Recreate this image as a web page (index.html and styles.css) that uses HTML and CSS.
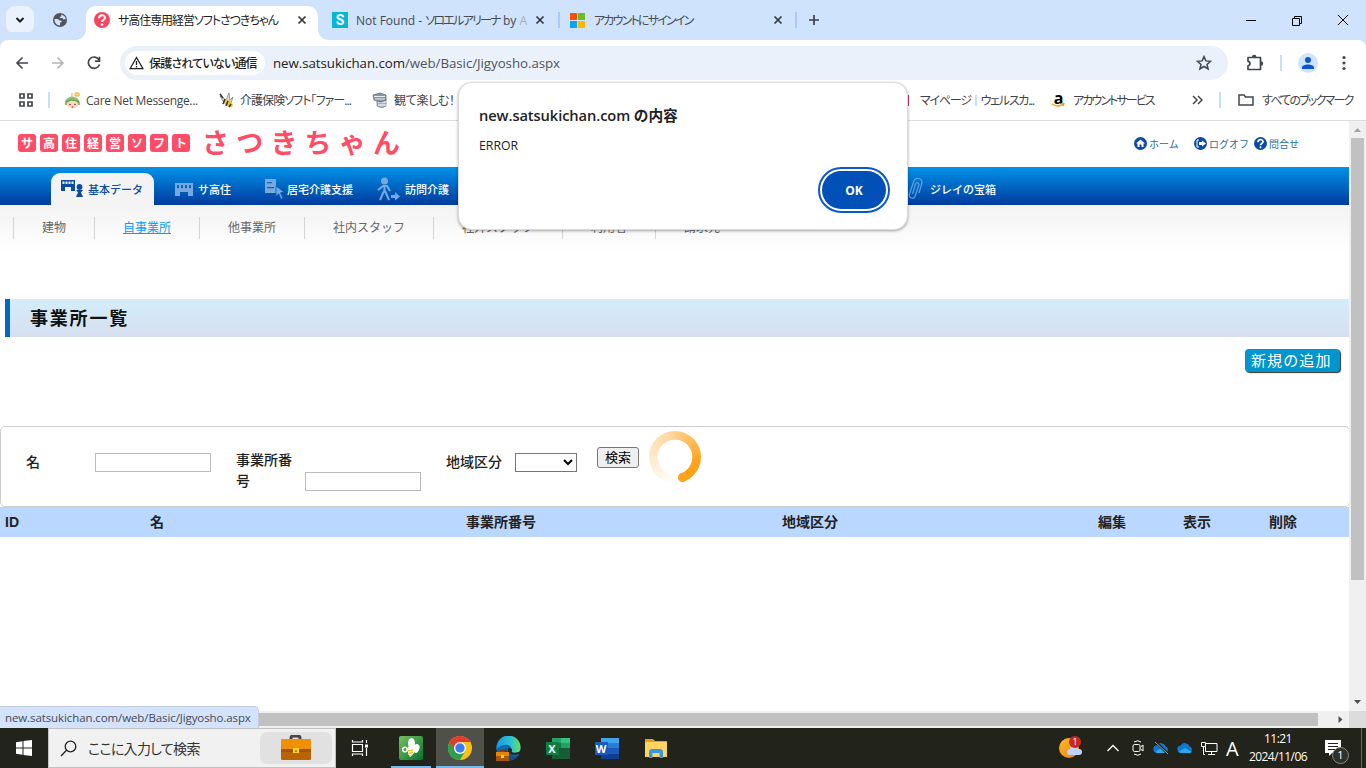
FILE: index.html
```html
<!DOCTYPE html>
<html lang="ja">
<head>
    <meta charset="UTF-8">
    <title>サ高住専用経営ソフトさつきちゃん</title>
    <link rel="stylesheet" href="styles.css">
</head>
<body>
<div class="screen">
    <div class="tabstrip">
        <div class="tab-search"><svg width="10" height="10" viewBox="0 0 10 10"><path d="M1.5 3l3.5 3.5L8.500 3" fill="none" stroke="#1f1f1f" stroke-width="2"/></svg></div>
        <svg class="globe" width="16" height="16" viewBox="0 0 16 16"><circle cx="8" cy="8" r="7" fill="#50555b"/><path d="M9 2.500c3 .5 4.500 2.500 4.800 4.500l-2.300.5-1-1.500H8V4.500h1.500zM2.500 7h3.500l1.500 1.500H9.500v2H8v3C4.500 13.500 2.300 10.500 2.500 7z" fill="#cfe3fc"/></svg>
        <div class="tab active">
            <svg width="16" height="16" viewBox="0 0 16 16"><circle cx="8" cy="8" r="8" fill="#fb4462"/><path d="M5 6.300c0-4 6-4 6-.7C11 8 8 8 8 10" fill="none" stroke="#fff" stroke-width="2"/><circle cx="8" cy="12.500" r="1.300" fill="#fff"/></svg>
            <span class="tab-name t1">サ高住専用経営ソフトさつきちゃん</span>
            <svg class="x" width="10" height="10" viewBox="0 0 10 10"><path d="M1.500 1.500l7 7m0-7l-7 7"/></svg>
        </div>
        <div class="tab tab2">
            <span class="fav-s">S</span>
            <span class="tab-name t2">Not Found - <span class="kana">ソロエルアリーナ</span> by <span class="fade">A</span></span>
            <svg class="x" width="10" height="10" viewBox="0 0 10 10"><path d="M1.500 1.500l7 7m0-7l-7 7"/></svg>
        </div>
        <div class="tab tab3">
            <svg width="15" height="15" viewBox="0 0 15 15"><path fill="#ff4a09" d="M0 0h7v7H0z"/><path fill="#6bbd23" d="M8 0h7v7H8z"/><path fill="#05a5f0" d="M0 8h7v7H0z"/><path fill="#ffb900" d="M8 8h7v7H8z"/></svg>
            <span class="tab-name t3">アカウントにサインイン</span>
            <svg class="x" width="10" height="10" viewBox="0 0 10 10"><path d="M1.500 1.500l7 7m0-7l-7 7"/></svg>
        </div>
        <svg class="plus" width="12" height="12" viewBox="0 0 12 12"><path d="M6 1v10M1 6h10" stroke="#3b4148" stroke-width="1.700"/></svg>
        <svg class="win-buttons" width="106" height="14" viewBox="0 0 106 14" fill="none" stroke="#000"><path d="M0 7.500h10M46.500 5.500h7v7h-7zM48.500 5v-1.500h7v7H54M92 2l10 10m0-10L92 12"/></svg>
    </div>

    <div class="toolbar">
        <svg width="14" height="14" viewBox="0 0 14 14"><path d="M13 7H2m5.500-5.500L2 7l5.500 5.500" fill="none" stroke="#42474c" stroke-width="1.600"/></svg>
        <svg width="14" height="14" viewBox="0 0 14 14"><path d="M1 7h11M6.500 1.500L12 7l-5.500 5.500" fill="none" stroke="#b3b5b8" stroke-width="1.600"/></svg>
        <svg width="14" height="14" viewBox="0 0 14 14"><path d="M12 3.800A5.700 5.700 0 1 0 12.500 8.500M12.500 .8v4.400H8" fill="none" stroke="#42474c" stroke-width="1.700"/></svg>
        <div class="omnibox">
            <div class="chip">
                <svg width="15" height="14" viewBox="0 0 15 14"><path d="M7.500 1.500L14 12.700H1z" fill="none" stroke="#222" stroke-width="1.300"/><path d="M7.500 5v4m0 1v1.500" stroke="#222" stroke-width="1.300"/></svg>
                <span>保護されていない通信</span>
            </div>
            <span class="url">new.satsukichan.com<i>/web/Basic/Jigyosho.aspx</i></span>
            <svg class="star" width="16" height="16" viewBox="0 0 16 16"><path d="M8 1.600l1.900 4.300 4.700.4-3.600 3.100 1.100 4.600L8 11.500 3.900 14 5 9.400 1.400 6.300l4.700-.4z" fill="none" stroke="#42474c" stroke-width="1.500"/></svg>
        </div>
        <svg class="puzzle" width="18" height="18" viewBox="0 0 18 18"><path d="M2 3.500h12.500v12H2v-3.700c2.600-.3 2.600-4.200 0-4.500z" fill="none" stroke="#42474c" stroke-width="1.700" stroke-linejoin="round"/><path d="M6 3a2.200 2.200 0 0 1 4.400 0zM15 7.300a2.200 2.200 0 0 1 0 4.400z" fill="#42474c"/></svg>
        <span class="bar"></span>
        <svg class="avatar" width="20" height="20" viewBox="0 0 20 20"><circle cx="10" cy="10" r="10" fill="#cfe3fc"/><circle cx="10" cy="7" r="3" fill="#0b57d0"/><path d="M4 16v-1.500c0-4 12-4 12 0V16z" fill="#0b57d0"/></svg>
        <svg class="dots" width="4" height="16" viewBox="0 0 4 16" fill="#42474c"><circle cx="2" cy="2.500" r="1.600"/><circle cx="2" cy="8" r="1.600"/><circle cx="2" cy="13.500" r="1.600"/></svg>
    </div>

    <div class="bookmarks">
        <svg class="apps" width="16" height="16" viewBox="0 0 16 16" fill="none" stroke="#42474c" stroke-width="1.700"><path d="M2 2h4v4H2zM10 2h4v4h-4zM2 10h4v4H2zM10 10h4v4h-4z"/></svg>
        <span class="bar"></span>
        <div class="bm bm1">
            <svg width="17" height="17" viewBox="0 0 17 17"><path d="M1 13C-1 2 17 2 16 13z" fill="#8fbf70"/><ellipse cx="8.500" cy="12.500" rx="5.500" ry="3.800" fill="#fbd9c4"/><path d="M2 10q6-4 13 0" stroke="#5e9850" fill="none"/><circle cx="6" cy="12.500" r=".8" fill="#633"/><circle cx="11" cy="12.500" r=".8" fill="#633"/><circle cx="8.500" cy="15" r="1" fill="#e55"/><path d="M8 5V1m3 0h4v3h-4z" stroke="#e8a93a" fill="#ffe08a"/></svg>
            <span>Care Net Messenge...</span>
        </div>
        <div class="bm bm2">
            <svg width="16" height="16" viewBox="0 0 16 16"><path d="M1 4l6 4 3-7 1 7 3-3-2 6H5z" fill="#d9dde0" stroke="#777" stroke-width=".7"/><ellipse cx="9" cy="11" rx="5.500" ry="3" fill="#e8c63b" transform="rotate(35 9 11)"/><path d="M6 7l-2 5m5-3l-2 5m5-2l-2 3M1 2l3 4" stroke="#333" stroke-width="1.500"/></svg>
            <span>介護保険ソフト｢ファー...</span>
        </div>
        <div class="bm bm3">
            <svg width="16" height="16" viewBox="0 0 16 16"><path d="M5 7h9v7l-4 2-5-2z" fill="#a9b4bd" stroke="#6c7983" stroke-width=".7"/><path d="M6 10h8m-8 3h8" stroke="#fff"/><path d="M1 3l7-2 6 2v5l-5 2-7-2z" fill="#8799a8" stroke="#59636c" stroke-width=".7"/><path d="M2 4.500h11M3 7h10" stroke="#e8edf0"/></svg>
            <span>観て楽しむ！</span>
        </div>
        <div class="bm bm4"><em></em><span>マイページ</span><b></b><span>ウェルスカ...</span></div>
        <div class="bm bm5">
            <span class="amazon">a<svg width="14" height="5" viewBox="0 0 14 5"><path d="M1 1q6 4 11 0M10 .8h2.800L12 3" fill="none" stroke="#f90" stroke-width="1.500"/></svg></span>
            <span>アカウントサービス</span>
        </div>
        <svg class="more" width="11" height="10" viewBox="0 0 11 10"><path d="M1 1l4 4-4 4m5-8l4 4-4 4" fill="none" stroke="#42474c" stroke-width="1.500"/></svg>
        <span class="bar bar2"></span>
        <div class="bm bm6">
            <svg width="16" height="14" viewBox="0 0 16 14"><path d="M1 2h5l1.500 2H15v8H1z" fill="none" stroke="#42474c" stroke-width="1.500"/></svg>
            <span>すべてのブックマーク</span>
        </div>
    </div>

    <div class="viewport">
        <div class="page">
            <div class="header">
                <div class="catch"><span>サ</span><span>高</span><span>住</span><span>経</span><span>営</span><span>ソ</span><span>フ</span><span>ト</span></div>
                <div class="logo">さつきちゃん</div>
                <div class="links">
                    <a class="home"><svg width="13" height="13" viewBox="0 0 13 13"><circle cx="6.500" cy="6.500" r="6.500" fill="#0a4aa8"/><path d="M6.500 2.500L11 6.500H9.500V10h-2V7.500h-2V10h-2V6.500H2z" fill="#fff"/></svg>ホーム</a>
                    <a class="logoff"><svg width="13" height="13" viewBox="0 0 13 13"><circle cx="6.500" cy="6.500" r="6.500" fill="#0a4aa8"/><path d="M5 3H3v7h2" fill="none" stroke="#fff"/><path d="M5 5h3V3.500l4 3-4 3V8H5z" fill="#fff"/></svg>ログオフ</a>
                    <a class="ask"><svg width="13" height="13" viewBox="0 0 13 13"><circle cx="6.500" cy="6.500" r="6.500" fill="#0a4aa8"/><path d="M4 5.200c0-3.300 5-3.300 5-.5C9 6.500 6.500 6.500 6.500 8.200" fill="none" stroke="#fff" stroke-width="1.700"/><circle cx="6.500" cy="10.200" r="1" fill="#fff"/></svg>問合せ</a>
                </div>
            </div>

            <div class="gnav">
                <a class="g1"><svg width="24" height="20" viewBox="0 0 24 20" fill="#0c4aa6"><path fill-rule="evenodd" d="M0 1h14v11h-4V8H4v4H0zM1.500 2.500v2.500h2V2.500zm3 0v2.500h2V2.500zm3 0v2.500h2V2.500zm3 0v2.500h2V2.500z"/><circle cx="18.500" cy="8" r="2.900"/><path d="M15 11h7l-2 2.500 2 4.500h-7l2-4.500z"/></svg><span>基本データ</span></a>
                <a class="g2"><svg width="18" height="13" viewBox="0 0 18 13" fill="#77a9df"><path fill-rule="evenodd" d="M0 0h18v13h-5V9H5v4H0zM2 2v3h2V2zm4 0v3h2V2zm4 0v3h2V2zm4 0v3h2V2z"/></svg><span>サ高住</span></a>
                <a class="g3"><svg width="20" height="21" viewBox="0 0 20 21" fill="#77a9df"><path fill-rule="evenodd" d="M0 0h11v14H0zM2 3v1.300h5V3zm0 5v1.300h7V8z"/><path d="M11 7l8 6-3.500.8 2.500 5.500-2 1-2.300-5.500-2.700 2.400z" stroke="#0758b8" stroke-width=".8"/></svg><span>居宅介護支援</span></a>
                <a class="g4"><svg width="23" height="25" viewBox="0 0 23 25" fill="none" stroke="#77a9df" stroke-width="2"><circle cx="7.500" cy="4" r="2.500" fill="#77a9df"/><path d="M7.500 8v7M1 13l5-4h4l3 5M7 14l-4 9m5-9l4 9"/><path d="M14 18h4v-3l5 4.500-5 4V21h-4z" fill="#77a9df" stroke="none"/></svg><span>訪問介護</span></a>
                <a class="g5"><svg width="15" height="25" viewBox="0 0 15 25"><path d="M4.500 17L7.500 7q1-2 2.500-1t.5 3l-3 9q-1 4-4 3t-2-4L5.500 5q1.500-4 5-3.500T14 6l-3 10" fill="none" stroke="#5fa2df" stroke-width="1.200"/></svg><span>ジレイの宝箱</span></a>
            </div>

            <ul class="subnav">
                <li>建物</li>
                <li class="current">自事業所</li>
                <li>他事業所</li>
                <li>社内スタッフ</li>
                <li>社外スタッフ</li>
                <li>利用者</li>
                <li>請求先</li>
            </ul>

            <h1>事業所一覧</h1>
            <div class="actions"><a class="add">新規の追加</a></div>

            <div class="search">
                <label class="name">名</label>
                <input type="text" class="i-name">
                <label class="no">事業所番号</label>
                <input type="text" class="i-no">
                <label class="area">地域区分</label>
                <select><option></option></select>
                <button type="button">検索</button>
                <div class="spinner"></div>
            </div>

            <div class="grid-head">
                <span>ID</span><span>名</span><span>事業所番号</span><span>地域区分</span><span>編集</span><span>表示</span><span>削除</span>
            </div>
        </div>
        <div class="vscroll">
            <svg width="17" height="17" viewBox="0 0 17 17"><path d="M5 11h7L8.500 7z" fill="#a3a3a3"/></svg>
            <div class="thumb"></div>
            <svg class="down" width="17" height="17" viewBox="0 0 17 17"><path d="M5 6h7l-3.500 4z" fill="#505050"/></svg>
        </div>
    </div>
    <div class="hscroll">
        <div class="thumb"></div>
        <svg width="17" height="17" viewBox="0 0 17 17"><path d="M6.500 5v7l4-3.500z" fill="#505050"/></svg>
        <div class="corner"></div>
    </div>

    <div class="taskbar">
        <div class="start"><svg width="16" height="16" viewBox="0 0 16 16" fill="#fff"><path d="M0 2.200L6.500 1.300v6.200H0zM7.500 1.100L16 0v7.500H7.500zM0 8.500h6.500v6.200L0 13.800zM7.500 8.500H16V16l-8.500-1.100z"/></svg></div>
        <div class="tb-search">
            <svg width="17" height="17" viewBox="0 0 17 17" fill="none" stroke="#222" stroke-width="1.300"><circle cx="10.500" cy="6.500" r="5.300"/><path d="M6.500 10.300L1 16"/></svg>
            <span>ここに入力して検索</span>
            <div class="case"><svg width="32" height="26" viewBox="0 0 32 26"><path d="M11 5V3q0-2 2-2h5q2 0 2 2v2" fill="none" stroke="#4b4642" stroke-width="3"/><rect x="1" y="4" width="30" height="21" rx="1.500" fill="#b96404"/><path d="M1 5.500Q1 4 2.500 4h27Q31 4 31 5.500V16H1z" fill="#ef9007"/><path d="M1 14h30v3H1z" fill="#a45502"/><path d="M13 13h6v5h-6z" fill="#ffd42b"/><path d="M15 15h2v2h-2z" fill="#c88902"/></svg></div>
        </div>
        <div class="app taskview"><svg width="18" height="18" viewBox="0 0 18 18" fill="none" stroke="#fff" stroke-width="1.200"><path d="M1.500 5.500h10v7h-10zM1.500 1v2h10V1M1.500 17v-2h10v2M15.500 1v3m0 5v8"/><path d="M14 5.500h3v3h-3z" fill="#fff" stroke="none"/></svg></div>
        <div class="app open"><svg width="24" height="24" viewBox="0 0 24 24"><defs><linearGradient id="gr" x2="1" y2="1"><stop stop-color="#73c162"/><stop offset="1" stop-color="#05742f"/></linearGradient></defs><rect width="24" height="24" rx="2" fill="url(#gr)"/><ellipse cx="12.500" cy="7.500" rx="3.500" ry="5.500" fill="#fff"/><ellipse cx="17.500" cy="12.500" rx="3" ry="4.500" fill="#fff" transform="rotate(20 17.500 12)"/><circle cx="6" cy="13.500" r="2.300" fill="none" stroke="#fff" stroke-width="1.500"/><path d="M9 11h6v6l-3.500 4L9 18z" fill="#fff"/><path d="M9 15l5-1m-5 4l5-2m-4 4l3-1" stroke="#f0cc2d" stroke-width="1.500"/></svg></div>
        <div class="app open focus"><svg width="24" height="24" viewBox="0 0 24 24"><circle cx="12" cy="12" r="12" fill="#fbc116"/><path d="M12 12L1.600 6A12 12 0 0 0 12 24l5.200-9z" fill="#2aa14c"/><path d="M1.600 6a12 12 0 0 1 20.800 0H12v6l-5.200 3z" fill="#e33b2e"/><circle cx="12" cy="12" r="6" fill="#fff"/><circle cx="12" cy="12" r="4.700" fill="#3b7ded"/></svg></div>
        <div class="app"><svg width="25" height="25" viewBox="0 0 25 25"><defs><linearGradient id="ed" x2="1"><stop stop-color="#1697dd"/><stop offset=".6" stop-color="#2cc3d5"/><stop offset="1" stop-color="#69de54"/></linearGradient></defs><circle cx="12.500" cy="12.500" r="12" fill="#1067b5"/><path d="M.5 11A12 12 0 0 1 24.500 12c0 5-7 7-10 4 3-4-1-8-6-7-4 0-7 3-8 5z" fill="url(#ed)"/><path d="M11 11q-2 3 2 7 5 4 10 1-4 5-9 5.500Q6 22 8 14z" fill="#124d93"/><path d="M12.500 12q-2 3 1 5.500 4 2.500 10.500 0l1-2q-6 2-9.500.5 2-4-3-4z" fill="#22241b"/><path d="M0 16h13v9H0z" fill="#e78606"/><path d="M0 20h13v5H0z" fill="#a95702"/><path d="M4 16v-1.500h5V16" fill="none" stroke="#733d08"/><path d="M5 19h3v3H5z" fill="#ffd640"/></svg></div>
        <div class="app"><div class="office excel"><i></i><b>X</b></div></div>
        <div class="app"><div class="office word"><i></i><b>W</b></div></div>
        <div class="app"><svg width="22" height="19" viewBox="0 0 22 19"><path d="M0 0h8l2 2h12v16H0z" fill="#e6a117"/><path d="M0 3h22v15H0z" fill="#ffd562"/><path d="M4 19v-6q0-3 3-3h8q3 0 3 3v6h-3.500v-5h-7v5z" fill="#3a96dd"/></svg></div>
        <div class="tray">
            <div class="weather"><svg width="24" height="24" viewBox="0 0 24 24"><defs><linearGradient id="sun" y2="1"><stop stop-color="#f9bd27"/><stop offset="1" stop-color="#f07c13"/></linearGradient></defs><circle cx="10" cy="12" r="10" fill="url(#sun)"/><rect x="8" y="13" width="15" height="6" rx="3" fill="#bed3f8"/><circle cx="15" cy="13" r="4" fill="#bed3f8"/></svg><b>1</b></div>
            <svg class="chev" width="12" height="8" viewBox="0 0 12 8"><path d="M.5 7L6 1.500 11.500 7" fill="none" stroke="#fff" stroke-width="1.300"/></svg>
            <svg class="meet" width="12" height="16" viewBox="0 0 12 16" fill="none" stroke="#fff"><rect x="1" y="4.500" width="7" height="7" rx="1.500"/><path d="M8.500 7l2.500-2v6L8.500 9M2 2q4-2.500 7 0M2 14q4 2.500 7 0"/></svg>
            <svg class="cloud" width="17" height="14" viewBox="0 0 17 14"><path d="M4 11.500a3.500 3.500 0 0 1-.3-7 5 5 0 0 1 9 1A3.200 3.200 0 0 1 13 11.500z" fill="#0f78d4"/><path d="M2 11l6-4 7 4q-1 1-2.500 1H4z" fill="#29a9ea"/><path d="M2 0l13 13" stroke="#22241c" stroke-width="2.500"/><path d="M2 1l13 12" stroke="#999" stroke-width="1"/></svg>
            <svg class="cloud" width="17" height="14" viewBox="0 0 17 14"><path d="M4 11.500a3.500 3.500 0 0 1-.3-7 5 5 0 0 1 9 1A3.200 3.200 0 0 1 13 11.500z" fill="#0f78d4"/><path d="M1 11l7-4 7 4q-1 1-2.500 1H4z" fill="#29a9ea"/></svg>
            <svg class="net" width="17" height="15" viewBox="0 0 17 15" fill="none" stroke="#fff"><path d="M5 2.500h11v8H4.500V6M10.500 11v2.500M7 13.500h7M.5 1.500h4v4h-4zM2.500 6v7.500H4"/></svg>
            <span class="ime">A</span>
            <div class="clock">11:21<br>2024/11/06</div>
            <div class="notice"><svg width="17" height="16" viewBox="0 0 17 16"><path d="M0 0h16v13h-9l-3 3v-3H0z" fill="#fff"/><path d="M3 3.500h10M3 6.500h10M3 9.500h7" stroke="#22241c"/></svg><b>1</b></div>
        </div>
    </div>

    <div class="status">new.satsukichan.com/web/Basic/Jigyosho.aspx</div>
    <div class="dialog">
        <div class="dialog-title">new.satsukichan.com の内容</div>
        <div class="dialog-text">ERROR</div>
        <button type="button" class="ok">OK</button>
    </div>
</div>
</body>
</html>
```
FILE: styles.css
```css
* {
    box-sizing: border-box;
}

body {
    margin: 0;
    overflow: hidden;
    font-family: "Open Sans", "Noto Sans CJK JP", sans-serif;
    font-size: 12px;
    color: #222;
}

svg {
    display: block;
    flex: none;
}

.screen {
    position: relative;
    display: flex;
    flex-direction: column;
    width: 1366px;
    height: 768px;
    overflow: hidden;
    background-color: #fff;
    white-space: nowrap;
}

/* tabs */
.tabstrip {
    display: flex;
    align-items: center;
    height: 40px;
    background-color: #cfe3fc;
}

.tab-search {
    display: flex;
    align-items: center;
    justify-content: center;
    width: 28px;
    height: 28px;
    margin-left: 6px;
    border-radius: 9px;
    background-color: #eaf2fd;
}

.globe {
    margin-left: 18px;
}

.tab {
    display: flex;
    align-items: center;
    height: 40px;
    color: #474b50;
    font-feature-settings: "palt";
}

.active {
    position: relative;
    z-index: 1;
    width: 232px;
    height: 34px;
    margin: 6px 0 0 18px;
    padding: 0 0 6px 8px;
    border-radius: 10px 10px 0 0;
    background-color: #fff;
    color: #222;
}

.active::before,
.active::after {
    content: "";
    position: absolute;
    bottom: 0;
    width: 10px;
    height: 10px;
}

.active::before {
    left: -10px;
    background: radial-gradient(circle at 0 0, transparent 9.5px, #fff 10px);
}

.active::after {
    right: -10px;
    background: radial-gradient(circle at 100% 0, transparent 9.5px, #fff 10px);
}

.tab-name {
    margin-left: 8px;
}

.t1 {
    width: 179px;
    letter-spacing: -1.05px;
}

.t2 {
    width: 172px;
}

.kana {
    letter-spacing: -1.75px;
}

.fade {
    color: #a3b2c5;
}

.t3 {
    width: 179px;
    margin-left: 9px;
    letter-spacing: -1.8px;
}

.x {
    fill: none;
    stroke: #33383d;
    stroke-width: 1.7;
}

.tab2 {
    width: 241px;
    margin-left: 14px;
}

.tab2 .x {
    margin-left: 7px;
}

.tab3 {
    width: 239px;
    margin-left: -15px;
    padding-left: 12px;
    background: linear-gradient(#a8cbfb, #a8cbfb) 0 12px / 2px 16px no-repeat, linear-gradient(#a8cbfb, #a8cbfb) 100% 12px / 2px 16px no-repeat;
}

.fav-s {
    width: 16px;
    height: 16px;
    background-color: #08b6da;
    color: #fff;
    font: bold 14px/16px "Roboto", sans-serif;
    text-align: center;
}

.plus {
    margin-left: 11px;
}

.win-buttons {
    margin: 0 14px 0 auto;
}

/* toolbar */
.toolbar {
    display: flex;
    align-items: center;
    height: 46px;
    padding-left: 15px;
    gap: 22px;
    border-radius: 8px 8px 0 0;
    background-color: #fff;
    box-shadow: 0 -8px 0 #cfe3fc;
}

.omnibox {
    display: flex;
    align-items: center;
    width: 1108px;
    height: 34px;
    margin-left: -3px;
    padding: 0 16px 0 5px;
    border-radius: 17px;
    background-color: #eaf1fb;
}

.chip {
    display: flex;
    align-items: center;
    width: 140px;
    height: 24px;
    padding-left: 4px;
    border-radius: 12px;
    background-color: #fff;
    font-weight: 500;
    font-feature-settings: "palt";
}

.chip span {
    margin-left: 5px;
    letter-spacing: -0.8px;
}

.url {
    margin-left: 8px;
    font-size: 13.3px;
    letter-spacing: -0.05px;
}

.url i {
    color: #50545a;
    font-style: normal;
}

.star {
    margin-left: auto;
}

.puzzle {
    margin-left: -4px;
}

.bar {
    flex: none;
    width: 2px;
    height: 16px;
    margin-left: -6px;
    background-color: #c8dffb;
}

.avatar {
    margin-left: -6px;
}

.dots {
    margin-left: 2px;
}

/* bookmarks */
.bookmarks {
    display: flex;
    align-items: center;
    height: 35px;
    padding: 0 0 6px 18px;
    border-bottom: 1px solid #dcdee0;
    color: #3f4449;
    font-feature-settings: "palt";
}

.bookmarks .bar {
    margin-left: 14px;
}

.bm {
    display: flex;
    align-items: center;
    gap: 5px;
    flex: none;
}

.bm1 {
    width: 155px;
    margin-left: 14px;
}

.bm1 span {
    letter-spacing: -0.3px;
}

.bm2 {
    width: 153px;
    letter-spacing: -0.95px;
}

.bm3 {
    width: 535px;
    gap: 6px;
    letter-spacing: -0.3px;
}

.bm4 {
    width: 144px;
    gap: 4px;
    letter-spacing: -1.25px;
}

.bm4 em {
    width: 2px;
    height: 11px;
    margin-right: 7px;
    background-color: #d6336c;
}

.bm4 b {
    width: 2px;
    height: 11px;
    background-color: #c8dffb;
}

.bm5 {
    width: 141px;
    gap: 7px;
    letter-spacing: -1.9px;
}

.amazon {
    width: 15px;
    font: bold 16px/10px "Open Sans", sans-serif;
    letter-spacing: 0;
    color: #000;
    text-align: center;
}

.bookmarks .bar2 {
    margin-left: 16px;
}

.bm6 {
    margin-left: 17px;
    gap: 8px;
    letter-spacing: -1.8px;
}

/* web page */
.viewport {
    display: flex;
    height: 590px;
}

.page {
    width: 1349px;
    overflow: hidden;
    font-family: "Noto Sans CJK JP", sans-serif;
}

.header {
    display: flex;
    align-items: center;
    height: 46px;
    padding-left: 18px;
}

.catch {
    display: flex;
    gap: 4px;
    margin-top: -3px;
}

.catch span {
    width: 18px;
    height: 18px;
    border-radius: 3px;
    background-color: #ff4d67;
    color: #fff;
    font-size: 12px;
    font-weight: bold;
    line-height: 17px;
    text-align: center;
}

.logo {
    width: 932px;
    margin: -5px 0 0 12px;
    color: #ff4d67;
    font-size: 27px;
    font-weight: 700;
    letter-spacing: 7.2px;
    line-height: 30px;
}

.links {
    display: flex;
    margin-top: -1px;
    color: #1f6f9f;
    font-size: 10px;
}

.links a {
    display: flex;
    align-items: center;
    gap: 2px;
}

.home,
.logoff {
    width: 60px;
}

.gnav {
    display: flex;
    align-items: center;
    height: 38px;
    background: linear-gradient(#0092ea, #003b9d);
    color: #fff;
    font-size: 11px;
    font-weight: 500;
}

.gnav a {
    display: flex;
    align-items: center;
    flex: none;
    height: 32px;
    margin-top: 6px;
}

.gnav .g1 {
    width: 103px;
    margin-left: 51px;
    padding-left: 10px;
    border-radius: 9px 9px 0 0;
    background-color: #f3f3f3;
    color: #0c4aa6;
}

.g1 span {
    margin-left: 3px;
}

.g2 {
    width: 90px;
    padding-left: 21px;
}

.g2 span {
    margin-left: 5px;
}

.g3 {
    width: 112px;
    padding-left: 21px;
}

.g3 span {
    margin-left: 2px;
}

.g4 {
    width: 552px;
    padding-left: 21px;
}

.g4 span {
    margin-left: 5px;
}

.g5 span {
    margin-left: 7px;
}

.subnav {
    display: flex;
    height: 48px;
    margin: 0;
    padding: 12px 0 0 13px;
    list-style: none;
    background: linear-gradient(#f3f3f3, #fff);
    color: #666;
}

.subnav li {
    height: 22px;
    padding: 0 28px;
    border-left: 1px solid #d5d5d5;
    line-height: 20px;
}

.subnav .current {
    color: #0d9cf2;
    text-decoration: underline;
}

h1 {
    height: 38px;
    margin: 46px 0 0 5px;
    padding-left: 20px;
    border-left: 5px solid #0069c8;
    background: linear-gradient(#d4edfa, #d6dff0);
    color: #111;
    font-size: 18px;
    letter-spacing: 1.8px;
    line-height: 37px;
}

.actions {
    display: flex;
    justify-content: flex-end;
    height: 89px;
    padding: 12px 9px 0 0;
}

.add {
    width: 95px;
    height: 23px;
    padding-left: 6px;
    border-radius: 4px;
    background-color: #0095cd;
    box-shadow: 1px 1px 1px #333;
    color: #fff;
    font-size: 15px;
    letter-spacing: 1.1px;
    line-height: 21px;
}

.search {
    display: flex;
    align-items: flex-start;
    width: 1350px;
    height: 81px;
    padding-left: 25px;
    border: 1px solid #ccc;
    border-radius: 5px;
    font-size: 14px;
    font-weight: 500;
    line-height: 21px;
}

.name {
    width: 69px;
    margin-top: 24px;
}

.search input {
    width: 116px;
    height: 19px;
    margin-top: 26px;
    border: 1px solid #bbb;
}

.search .i-no {
    margin-top: 45px;
}

.no {
    width: 69px;
    padding-right: 12px;
    margin: 22px 0 0 25px;
    white-space: normal;
}

.area {
    width: 69px;
    margin: 24px 0 0 25px;
}

.search select {
    width: 62px;
    height: 19px;
    margin-top: 26px;
    border: 1px solid #767676;
    background-color: #fff;
}

.search button {
    width: 42px;
    height: 21px;
    margin: 20px 0 0 20px;
    padding: 0 0 2px;
    border: 1px solid #767676;
    border-radius: 3px;
    background-color: #efefef;
    color: #000;
    font: 13px/17px "Noto Sans CJK JP", sans-serif;
}

.spinner {
    position: relative;
    width: 52px;
    height: 52px;
    margin: 4px 0 0 10px;
    border-radius: 50%;
    background: radial-gradient(circle, #fff 17px, transparent 17.7px), conic-gradient(from 162deg, #fff 0 18deg, #ffd9a3 180deg, #ffa31a 300deg, #ffa31a);
}

/* rounded end of the ring */
.spinner::after {
    content: "";
    position: absolute;
    left: 29px;
    top: 42px;
    width: 9px;
    height: 9px;
    border-radius: 50%;
    background-color: #ffa31a;
}

.grid-head {
    display: grid;
    grid-template-columns: 145px 316px 316px 316px 85px 86px 1fr;
    height: 30px;
    padding-left: 5px;
    background-color: #bad8ff;
    font-size: 14px;
    font-weight: bold;
    line-height: 29px;
}

.grid-head span:first-child {
    font-family: "Liberation Sans", sans-serif;
    line-height: 31px;
}

.vscroll {
    display: flex;
    flex-direction: column;
    width: 17px;
    background-color: #f0f0f0;
}

.vscroll .thumb {
    width: 13px;
    height: 442px;
    margin-left: 2px;
    background-color: #c1c1c1;
}

.down {
    margin-top: auto;
}

.hscroll {
    display: flex;
    align-items: center;
    height: 17px;
    background-color: #f0f0f0;
}

.hscroll .thumb {
    width: 1301px;
    height: 13px;
    margin: 0 14px 0 17px;
    background-color: #c1c1c1;
}

.corner {
    width: 17px;
    height: 17px;
    background-color: #dcdcdc;
}

/* taskbar */
.taskbar {
    display: flex;
    height: 40px;
    background-color: #22241b;
    color: #fff;
}

.start {
    display: flex;
    align-items: center;
    justify-content: center;
    width: 48px;
}

.tb-search {
    display: flex;
    align-items: center;
    width: 288px;
    padding: 0 3px 0 11px;
    border: 1px solid #c2c2c2;
    background-color: #f1f1f1;
    color: #333;
    font-size: 14px;
    font-feature-settings: "palt";
}

.tb-search span {
    margin-left: 11px;
    letter-spacing: -0.7px;
}

.case {
    display: flex;
    align-items: center;
    justify-content: center;
    width: 72px;
    height: 32px;
    margin-left: auto;
    border-radius: 7px;
    background-color: #e1e1e1;
}

.app {
    display: flex;
    align-items: center;
    justify-content: center;
    width: 49px;
}

.taskview {
    padding-right: 2px;
}

.open {
    width: 51px;
    background: linear-gradient(#76b9ed, #76b9ed) 50% 100% / 40px 2px no-repeat;
}

.focus {
    width: 48px;
    background-color: #4f5049;
    background-size: 48px 2px;
}

.office {
    display: grid;
    width: 24px;
    height: 22px;
    align-items: center;
}

.office i,
.office b {
    grid-area: 1 / 1;
}

.office i {
    width: 18px;
    height: 21px;
    margin-left: 6px;
}

.office b {
    width: 13px;
    height: 13px;
    font: bold 11px/13px "Open Sans", sans-serif;
    text-align: center;
}

.excel i {
    background: linear-gradient(90deg, #21a366 50%, #33c481 50%) 0 0 / 100% 25% no-repeat, linear-gradient(90deg, #107c41 50%, #21a366 50%) 0 33% / 100% 25% no-repeat, #185c37;
}

.excel b {
    background-color: #107c41;
}

.word i {
    background: linear-gradient(#41a5ee 25%, #2b7cd3 25% 50%, #185abd 50% 75%, #103f91 75%);
}

.word b {
    background-color: #185abd;
}

.tray {
    display: flex;
    align-items: center;
    width: 307px;
    margin-left: auto;
    background: linear-gradient(#6b6c66, #6b6c66) 302px 0 / 1px 100% no-repeat;
}

.weather,
.notice {
    position: relative;
}

.weather b {
    position: absolute;
    left: 10px;
    top: 0;
    width: 12px;
    height: 12px;
    border-radius: 50%;
    background-color: #c42b1c;
    font: 9px/12px "Open Sans", sans-serif;
    text-align: center;
}

.chev {
    margin-left: 24px;
}

.meet {
    margin-left: 13px;
}

.cloud {
    margin: 0 0 0 9px;
}

.cloud + .cloud {
    margin-left: 7px;
}

.net {
    margin-left: 7px;
}

.ime {
    width: 14px;
    margin-left: 8px;
    font-size: 20px;
}

.clock {
    width: 62px;
    margin: 0 0 0 7px;
    font-size: 12px;
    letter-spacing: -0.55px;
    line-height: 18px;
    text-align: center;
}

.notice {
    margin-left: 16px;
}

.notice b {
    position: absolute;
    left: 7px;
    top: 7px;
    width: 17px;
    height: 17px;
    border: 1px solid #888;
    border-radius: 50%;
    background-color: #303229;
    font-size: 11px;
    font-weight: normal;
    line-height: 14px;
    text-align: center;
}

/* overlays */
.status {
    position: absolute;
    left: 0;
    top: 706px;
    width: 259px;
    height: 22px;
    padding-left: 5px;
    border: solid #c3cfdf;
    border-width: 1px 1px 0 0;
    border-radius: 0 5px 0 0;
    background-color: #d3e3fd;
    color: #474b50;
    font-size: 11.5px;
    letter-spacing: -0.1px;
    line-height: 22px;
}

.dialog {
    position: absolute;
    left: 458px;
    top: 82px;
    z-index: 2;
    width: 450px;
    height: 148px;
    padding: 21px 20px;
    border: 1px solid #dcdcdc;
    border-radius: 14px;
    background-color: #fff;
    box-shadow: 0 1px 3px rgba(0, 0, 0, 0.35);
}

.dialog-title {
    font-size: 14.7px;
    font-weight: 600;
    letter-spacing: -0.1px;
    line-height: 22px;
}

.dialog-text {
    margin-top: 9px;
    font-size: 12.3px;
    line-height: 21px;
}

.ok {
    display: block;
    width: 64px;
    height: 38px;
    margin: 15px 1px 0 auto;
    border: 0;
    border-radius: 19px;
    outline: 2px solid #0b57d0;
    outline-offset: 2px;
    background-color: #0050b8;
    color: #fff;
    font: bold 12px "Open Sans", sans-serif;
}
```
